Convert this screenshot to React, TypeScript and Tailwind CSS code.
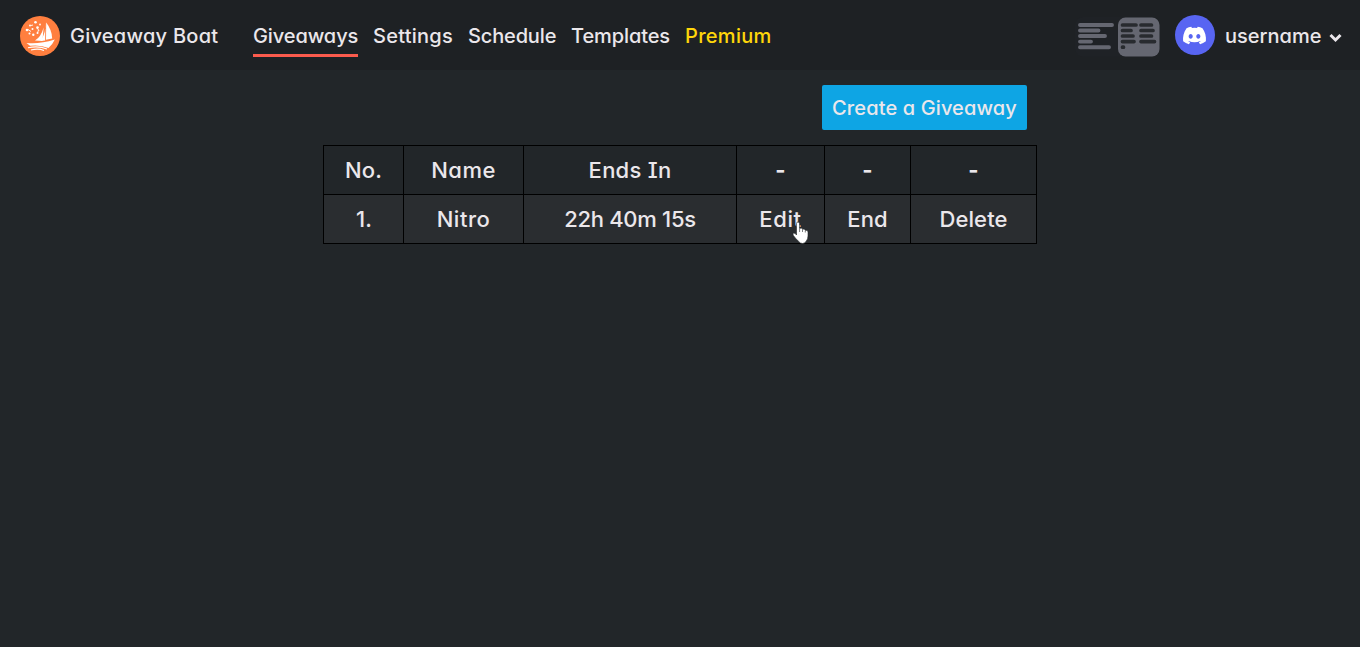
import { FaDiscord } from "react-icons/fa";

const links = [
  { label: "Settings", style: "w-[80px] tracking-[0.25px] text-[#ebe7eb]" },
  { label: "Schedule", style: "w-[88px] tracking-[-0.15px] text-[#ebe7eb]" },
  { label: "Templates", style: "w-[99px] tracking-[-0.1px] text-[#ebe7eb]" },
  { label: "Premium", style: "w-[86px] tracking-[0.3px] text-[#ffd60a]" },
];

const headings = [
  { label: "No.", style: "tracking-[0.1px]" },
  { label: "Name", style: "tracking-[0.5px]" },
  { label: "Ends In", style: "tracking-[0.25px]" },
  { label: "-", style: "font-bold" },
  { label: "-", style: "font-bold" },
  { label: "-", style: "font-bold" },
];

const cells = [
  { label: "1.", style: "pl-px" },
  { label: "Nitro", style: "tracking-[0.5px]" },
  { label: "22h 40m 15s", style: "tracking-[-0.3px]" },
  { label: "Edit", style: "tracking-[0.6px]" },
  { label: "End", style: "tracking-[0.1px]" },
  { label: "Delete", style: "tracking-[0.1px]" },
];

function BoatLogo() {
  return (
    <svg className="mt-px size-10" viewBox="0 0 40 40">
      <circle cx="20" cy="20" r="20" fill="#ff7f3f" />
      <path d="M25.3 6 Q26.5 16 20.5 25 L25.2 24.5Z" fill="#fff" />
      <path d="M26.2 6.5 Q32 14 32.2 22.5 L26 23.8Z" fill="#fff" />
      <path d="M15 24.5 Q21 21 23.6 11.5 L22.5 25Z" fill="#fff" />
      <path d="M6.5 27 Q19 28.5 34.8 23.6 Q33 28 28.5 32 Q20 28.5 10 29.8Z" fill="#fff" />
      <path d="M8 31.8 Q18 29.4 27 33 M11 34 Q18 32 24 34.4" stroke="#fff" strokeWidth="1.1" fill="none" />
      <g fill="#fff">
        <circle cx="15.5" cy="6.3" r="1.3" /><circle cx="10" cy="9.6" r="1" /><circle cx="7" cy="14" r="1.3" />
        <circle cx="12.5" cy="13" r="1" /><circle cx="17.5" cy="11.5" r="1.3" /><circle cx="9.5" cy="17.5" r="1" />
        <circle cx="13.3" cy="18.8" r="1.2" /><circle cx="17.5" cy="17" r="1" /><circle cx="20" cy="8.5" r=".9" />
      </g>
      <path d="M8 13.5l3 2M17 12l2 2.5M17.5 17l1-3M11 9.5l2-.5" stroke="#fff" strokeWidth=".9" />
    </svg>
  );
}

function LayoutSwitch() {
  return (
    <svg className="mt-[3px] h-[40px] w-[85px]" viewBox="0 0 85 40">
      <rect x="0" y="0" width="85" height="39.5" rx="8" fill="#1f2226" />
      <path d="M5 8H37M5 13.5H23.5M5 19H30M5 24.6H16M5 30.2H34" stroke="#656771" strokeWidth="3.9" strokeLinecap="round" />
      <rect x="43" y="0.5" width="41.5" height="39" rx="7.5" fill="#656771" />
      <path
        d="M47.5 8H61M66 8H76.5M47.5 13.5H56M66 13.5H78M47.5 19H58M66 19H76.5M47.5 24.6H59M66 24.6H79.5M47.5 30.2H48.5"
        stroke="#282b2f" strokeWidth="3.7" strokeLinecap="round"
      />
    </svg>
  );
}

function HandCursor() {
  return (
    <svg className="pointer-events-none absolute top-[76px] left-[469px] h-[23px] w-[17px]" viewBox="0 0 17 23">
      <path
        d="M4.5 2.5Q4.5 1 6 1Q7.5 1 7.5 2.5V7.500Q10 6.3 10.5 8.3Q12.5 7.3 13.3 9.3Q16 8.7 16 11V15Q16 18 14.3 20Q13 22.5 10.500 22.5Q8 22.5 6.5 20.3Q3.500 17.5 1.2 14.2Q.5 12.5 1.8 12Q3.2 12 4.5 14Z"
        fill="#fff" stroke="#222629" strokeWidth=".6"
      />
      <path d="M7.6 8V11M10.500 8.500V11M13.3 9.5V11.500" stroke="#222629" strokeWidth=".6" />
    </svg>
  );
}

export default function App() {
  return (
    <div className="min-h-screen bg-[#222629] font-['Inter',sans-serif] font-medium text-[#ebe7eb] [font-feature-settings:'cv11','cv08']">
      <header className="flex h-[70px] items-center bg-[#1e2124] pr-[18px] pl-5 text-[20px] whitespace-nowrap">
        <BoatLogo />
        <span className="mt-[2px] ml-[10px] w-[148px] tracking-[0.25px]">Giveaway Boat</span>
        <nav className="mt-[2px] ml-[35px] flex gap-[15px]">
          <a className="relative w-[105px] tracking-[-0.1px]">
            Giveaways
            <span className="absolute -bottom-[6px] left-0 h-[3px] w-full bg-[#fb5b4d]" />
          </a>
          {links.map((l) => (
            <a key={l.label} className={l.style}>{l.label}</a>
          ))}
        </nav>
        <div className="ml-auto flex items-center">
          <LayoutSwitch />
          <span className="ml-[15px] flex size-10 items-center justify-center rounded-full bg-[#5865f2] pr-px">
            <FaDiscord className="size-[25px] text-white" />
          </span>
          <span className="mt-[2px] ml-[10px] w-[96px]">username</span>
          <svg className="mt-[5px] ml-2 h-[10px] w-[13px]" viewBox="0 0 13 10">
            <path d="M1.5 2L6.5 7L11.5 2" fill="none" stroke="#ebe7eb" strokeWidth="3" />
          </svg>
        </div>
      </header>
      <main className="mx-auto w-[714px] pt-[15px]">
        <div className="flex justify-end pr-[10px]">
          <button className="h-[45px] w-[205px] rounded-[2px] bg-[#0ea5e4] text-[20px] tracking-[0.12px] whitespace-nowrap">Create a Giveaway</button>
        </div>
        <div className="relative mt-[15px]">
          <table className="w-[714px] table-fixed border-collapse text-center text-[22px]">
            <colgroup>
              <col className="w-[80px]" /><col className="w-[120px]" /><col className="w-[213px]" />
              <col className="w-[88px]" /><col className="w-[86px]" /><col className="w-[126px]" />
            </colgroup>
            <tbody className="[&_td]:border [&_td]:border-black">
              <tr className="h-[49px]">
                {headings.map((h, i) => (
                  <td key={i} className={h.style}>{h.label}</td>
                ))}
              </tr>
              <tr className="h-[49px] bg-[#2a2d30]">
                {cells.map((c) => (
                  <td key={c.label} className={c.style}>{c.label}</td>
                ))}
              </tr>
            </tbody>
          </table>
          <HandCursor />
        </div>
      </main>
    </div>
  );
}
